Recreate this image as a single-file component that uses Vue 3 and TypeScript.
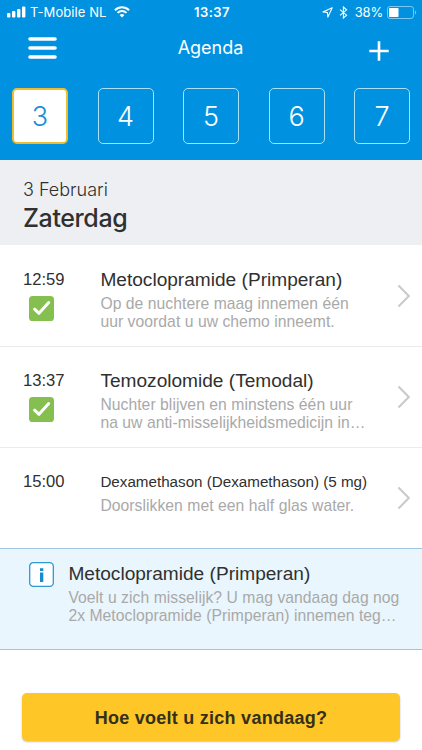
<script setup lang="ts">
interface Appointment {
  time: string
  title: string
  lines: string[]
  done: boolean
  compact?: boolean
}

const days: number[] = [3, 4, 5, 6, 7]
const selected = 3

const appointments: Appointment[] = [
  {
    time: '12:59',
    title: 'Metoclopramide (Primperan)',
    lines: ['Op de nuchtere maag innemen één', 'uur voordat u uw chemo inneemt.'],
    done: true,
  },
  {
    time: '13:37',
    title: 'Temozolomide (Temodal)',
    lines: ['Nuchter blijven en minstens één uur', 'na uw anti-misselijkheidsmedicijn in…'],
    done: true,
  },
  {
    time: '15:00',
    title: 'Dexamethason (Dexamethason) (5 mg)',
    lines: ['Doorslikken met een half glas water.'],
    done: false,
    compact: true,
  },
]
</script>

<template>
  <main class="screen">
    <header class="header">
      <div class="status">
        <div class="status-left">
          <svg class="signal" width="19" height="12" viewBox="0 0 19 12" fill="#fff">
            <rect x="0" y="7" width="3.4" height="4.6" rx="1" />
            <rect x="5" y="5" width="3.4" height="6.6" rx="1" />
            <rect x="10" y="3" width="3.4" height="8.6" rx="1" />
            <rect x="15" y="0.6" width="3.4" height="11" rx="1" />
          </svg>
          <span class="carrier">T-Mobile NL</span>
          <svg class="wifi" width="16" height="12" viewBox="0 0 16 12" fill="none" stroke="#fff" stroke-width="2">
            <path d="M0.9 4.2C4.9 0.3 11.1 0.3 15.1 4.2" />
            <path d="M3.5 6.9C6 4.5 10 4.5 12.5 6.9" />
            <path d="M5.6 8.9C7 7.7 9 7.7 10.4 8.9L8 11.4Z" fill="#fff" stroke="none" />
          </svg>
        </div>
        <span class="clock">13:37</span>
        <div class="status-right">
          <svg class="location" width="11" height="11" viewBox="0 0 11 11" fill="none" stroke="#fff" stroke-width="1.1" stroke-linejoin="round">
            <path d="M10.2 0.8L0.9 4.9L5.4 5.5L5.9 10.1Z" />
          </svg>
          <svg class="bluetooth" width="9" height="13" viewBox="0 0 9 13" fill="none" stroke="#fff" stroke-width="1.1">
            <path d="M1 3.6L7.6 9.2L4.4 12V1L7.6 3.8L1 9.4" />
          </svg>
          <span class="percent">38%</span>
          <svg class="battery" width="30" height="13" viewBox="0 0 30 13">
            <rect x="0.5" y="0.5" width="26" height="12" rx="2.6" fill="none" stroke="#7fc7ef" />
            <rect x="2" y="2" width="9.5" height="9" rx="0.8" fill="#fff" />
            <path d="M28 4.5C29.6 5 29.6 8 28 8.5Z" fill="#7fc7ef" />
          </svg>
        </div>
      </div>
      <nav class="nav">
        <button class="icon-button menu" aria-label="Menu">
          <svg width="30" height="24" viewBox="0 0 30 24" stroke="#fff" stroke-width="3.6" stroke-linecap="round">
            <path d="M3 3H28M3 12H28M3 21H28" />
          </svg>
        </button>
        <h1 class="nav-title">Agenda</h1>
        <button class="icon-button add" aria-label="Toevoegen">
          <svg width="20" height="20" viewBox="0 0 20 20" stroke="#fff" stroke-width="2.6">
            <path d="M0.3 10H19.7M10 0.3V19.7" />
          </svg>
        </button>
      </nav>
      <div class="days">
        <button v-for="day in days" :key="day" class="day" :class="{ selected: day === selected }">{{ day }}</button>
      </div>
    </header>

    <section class="date">
      <p class="date-day">3 Februari</p>
      <h2 class="date-name">Zaterdag</h2>
    </section>

    <section>
      <article v-for="item in appointments" :key="item.time" class="row">
        <div class="when">
          <span class="time">{{ item.time }}</span>
          <svg v-if="item.done" class="check" width="25" height="25" viewBox="0 0 25 25">
            <rect width="25" height="25" rx="3.6" fill="#84bf4f" />
            <path d="M5.6 13.2L10 17.3L19.7 6.6" fill="none" stroke="#fff" stroke-width="3" stroke-linecap="round" stroke-linejoin="round" />
          </svg>
        </div>
        <div class="body">
          <h3 class="title" :class="{ compact: item.compact }">{{ item.title }}</h3>
          <p v-for="line in item.lines" :key="line" class="line">{{ line }}</p>
        </div>
        <svg class="chevron" width="14" height="24" viewBox="0 0 14 24" fill="none" stroke="#cacaca" stroke-width="2.1">
          <path d="M1.5 1.5L11.8 12L1.5 22.5" />
        </svg>
      </article>
    </section>

    <section class="notice">
      <svg class="info" width="25" height="25" viewBox="0 0 25 25">
        <rect x="0.7" y="0.7" width="23.6" height="23.6" rx="3.6" fill="#fff" stroke="#2c99d5" stroke-width="1.3" />
        <path d="M11 6.2H14.3V9H11ZM11 10.6H14.3V20H11Z" fill="#168bcd" />
      </svg>
      <div class="body">
        <h3 class="title">Metoclopramide (Primperan)</h3>
        <p class="line">Voelt u zich misselijk? U mag vandaag dag nog</p>
        <p class="line">2x Metoclopramide (Primperan) innemen teg…</p>
      </div>
    </section>

    <footer class="footer">
      <button class="cta">Hoe voelt u zich vandaag?</button>
    </footer>
  </main>
</template>

<style>
body {
  margin: 0;
  background: #fff;
}
</style>

<style scoped>
.screen {
  width: 422px;
  height: 750px;
  overflow: hidden;
  background: #fff;
  color: #303030;
  font-family: 'Liberation Sans', Arial, sans-serif;
}
h1, h2, h3, p {
  margin: 0;
  font-weight: 400;
}
button {
  border: 0;
  padding: 0;
  background: none;
  color: inherit;
  font: inherit;
}
svg {
  display: block;
  flex: none;
}
.header {
  height: 160px;
  background: #0092e1;
  color: #fff;
  font-family: Inter, sans-serif;
}
.status {
  display: grid;
  grid-template-columns: 1fr auto 1fr;
  align-items: center;
  height: 24px;
  padding: 0 5px 0 7px;
  font-size: 13px;
  line-height: 24px;
}
.status-left, .status-right {
  display: flex;
  align-items: center;
}
.status-right {
  justify-content: flex-end;
}
.carrier {
  margin: 0 8px 0 4px;
  letter-spacing: 0.08px;
}
.clock {
  font-weight: 600;
  letter-spacing: 0.5px;
}
.location {
  margin-right: 6px;
}
.bluetooth {
  margin-right: 7px;
}
.percent {
  margin-right: 4px;
  letter-spacing: -0.2px;
}
.nav {
  display: grid;
  grid-template-columns: 1fr auto 1fr;
  align-items: center;
  height: 47px;
  padding: 0 33px 0 27px;
}
.icon-button {
  display: block;
}
.menu {
  justify-self: start;
}
.add {
  justify-self: end;
  margin-top: 7px;
}
.nav-title {
  padding-left: 5px;
  font-size: 18px;
  line-height: 24px;
}
.days {
  display: flex;
  justify-content: space-between;
  padding: 17px 12px 0;
}
.day {
  box-sizing: border-box;
  width: 56px;
  height: 56px;
  border: 1px solid #a9e1f8;
  border-radius: 5px;
  font-size: 27px;
  font-weight: 350;
}
.day.selected {
  border: 2px solid #edbd31;
  background: #fff;
  color: #1b8fd3;
}
.date {
  box-sizing: border-box;
  height: 85px;
  padding: 18px 23px 0;
  background: #eeeff2;
  font-family: Inter, sans-serif;
}
.date-day {
  font-size: 18px;
  font-weight: 350;
  line-height: 24px;
}
.date-name {
  font-size: 25px;
  font-weight: 500;
  line-height: 33px;
  letter-spacing: -0.4px;
}
.row {
  box-sizing: border-box;
  display: flex;
  height: 101px;
  padding: 23px 11px 0 23px;
}
.row + .row {
  border-top: 1px solid #ebebeb;
  padding-top: 22px;
}
.when {
  width: 77px;
}
.time {
  display: block;
  font-size: 16.6px;
  line-height: 24px;
}
.check {
  margin: 4px 0 0 6px;
}
.body {
  flex: 1;
  padding-left: 0.4px;
  white-space: nowrap;
}
.title {
  font-size: 19.1px;
  line-height: 24px;
  margin-bottom: 3px;
}
.title.compact {
  font-size: 15.2px;
}
.line {
  color: #a9a9a9;
  font-size: 15.7px;
  line-height: 18px;
  letter-spacing: 0.05px;
}
.chevron {
  margin-top: 16px;
}
.notice {
  box-sizing: border-box;
  display: flex;
  gap: 14px;
  height: 102px;
  padding: 13px 10px 0 29px;
  border: solid #9fc6de;
  border-width: 1px 0;
  background: #e9f6fd;
}
.footer {
  padding: 43px 22px 0;
}
.cta {
  display: block;
  width: 378px;
  height: 48px;
  padding-top: 2px;
  border-radius: 5px;
  background: #fec627;
  box-shadow: 0 1px 2px #8888;
  color: #33301c;
  font-size: 18px;
  font-weight: 700;
  letter-spacing: 0.25px;
}
</style>
